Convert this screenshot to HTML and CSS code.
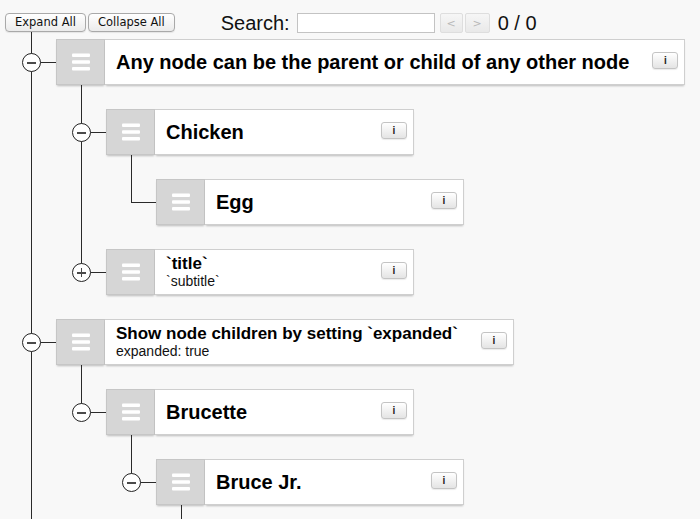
FILE: index.html
```html
<!DOCTYPE html>
<html lang="en">
<head>
<meta charset="utf-8">
<title>Sortable tree</title>
<link rel="stylesheet" href="styles.css">
</head>
<body>
<header class="toolbar">
  <button class="btn">Expand All</button>
  <button class="btn">Collapse All</button>
  <form class="search">
    <label class="search-label" for="q">Search:</label>
    <input id="q" class="search-input" type="text">
    <button type="button" class="nav-btn nav-prev" disabled>&lt;</button>
    <button type="button" class="nav-btn" disabled>&gt;</button>
    <span class="search-count">0 / 0</span>
  </form>
</header>

<div class="tree">
  <div class="row">
    <div class="scaf full hz"></div>
    <div class="node has-children">
      <button class="toggle minus" aria-label="Collapse"></button>
      <div class="handle"><svg viewBox="0 0 18 18" width="18" height="18"><rect y="0.5" width="18" height="3.5" rx="1"/><rect y="7.25" width="18" height="3.5" rx="1"/><rect y="14" width="18" height="3.5" rx="1"/></svg></div>
      <div class="content">
        <div class="label"><span class="title">Any node can be the parent or child of any other node</span></div>
        <button class="info">i</button>
      </div>
    </div>
  </div>

  <div class="row">
    <div class="scaf full"></div>
    <div class="scaf full hz"></div>
    <div class="node has-children">
      <button class="toggle minus" aria-label="Collapse"></button>
      <div class="handle"><svg viewBox="0 0 18 18" width="18" height="18"><rect y="0.5" width="18" height="3.5" rx="1"/><rect y="7.25" width="18" height="3.5" rx="1"/><rect y="14" width="18" height="3.5" rx="1"/></svg></div>
      <div class="content">
        <div class="label"><span class="title">Chicken</span></div>
        <button class="info">i</button>
      </div>
    </div>
  </div>

  <div class="row">
    <div class="scaf full"></div>
    <div class="scaf full"></div>
    <div class="scaf half hz"></div>
    <div class="node">
      <div class="handle"><svg viewBox="0 0 18 18" width="18" height="18"><rect y="0.5" width="18" height="3.5" rx="1"/><rect y="7.25" width="18" height="3.5" rx="1"/><rect y="14" width="18" height="3.5" rx="1"/></svg></div>
      <div class="content">
        <div class="label"><span class="title">Egg</span></div>
        <button class="info">i</button>
      </div>
    </div>
  </div>

  <div class="row">
    <div class="scaf full"></div>
    <div class="scaf half hz"></div>
    <div class="node">
      <button class="toggle plus" aria-label="Expand"></button>
      <div class="handle"><svg viewBox="0 0 18 18" width="18" height="18"><rect y="0.5" width="18" height="3.5" rx="1"/><rect y="7.25" width="18" height="3.5" rx="1"/><rect y="14" width="18" height="3.5" rx="1"/></svg></div>
      <div class="content">
        <div class="label">
          <span class="title small">`title`</span>
          <span class="subtitle">`subtitle`</span>
        </div>
        <button class="info">i</button>
      </div>
    </div>
  </div>

  <div class="row">
    <div class="scaf full hz"></div>
    <div class="node has-children">
      <button class="toggle minus" aria-label="Collapse"></button>
      <div class="handle"><svg viewBox="0 0 18 18" width="18" height="18"><rect y="0.5" width="18" height="3.5" rx="1"/><rect y="7.25" width="18" height="3.5" rx="1"/><rect y="14" width="18" height="3.5" rx="1"/></svg></div>
      <div class="content">
        <div class="label">
          <span class="title small">Show node children by setting `expanded`</span>
          <span class="subtitle">expanded: true</span>
        </div>
        <button class="info">i</button>
      </div>
    </div>
  </div>

  <div class="row">
    <div class="scaf full"></div>
    <div class="scaf half hz"></div>
    <div class="node has-children">
      <button class="toggle minus" aria-label="Collapse"></button>
      <div class="handle"><svg viewBox="0 0 18 18" width="18" height="18"><rect y="0.5" width="18" height="3.5" rx="1"/><rect y="7.25" width="18" height="3.5" rx="1"/><rect y="14" width="18" height="3.5" rx="1"/></svg></div>
      <div class="content">
        <div class="label"><span class="title">Brucette</span></div>
        <button class="info">i</button>
      </div>
    </div>
  </div>

  <div class="row">
    <div class="scaf full"></div>
    <div class="scaf"></div>
    <div class="scaf half hz"></div>
    <div class="node has-children">
      <button class="toggle minus" aria-label="Collapse"></button>
      <div class="handle"><svg viewBox="0 0 18 18" width="18" height="18"><rect y="0.5" width="18" height="3.5" rx="1"/><rect y="7.25" width="18" height="3.5" rx="1"/><rect y="14" width="18" height="3.5" rx="1"/></svg></div>
      <div class="content">
        <div class="label"><span class="title">Bruce Jr.</span></div>
        <button class="info">i</button>
      </div>
    </div>
  </div>

  <div class="row" aria-hidden="true">
    <div class="scaf full"></div>
    <div class="scaf"></div>
    <div class="scaf"></div>
    <div class="scaf half hz"></div>
  </div>
</div>
</body>
</html>
```

FILE: styles.css
```css
* { box-sizing: border-box; }

html, body {
  margin: 0;
  padding: 0;
  height: 100%;
  overflow: hidden;
  background: #f8f8f8;
  font-family: "Liberation Sans", Arial, Helvetica, sans-serif;
  color: #000;
}

/* ---------- toolbar ---------- */
.toolbar {
  position: relative;
  z-index: 2;
  height: 27px;
  padding: 13px 0 0 5px;
  display: flex;
  align-items: flex-start;
  gap: 2px;
}

.btn {
  height: 19px;
  padding: 0 9px;
  border: 1px solid #a9a9a9;
  border-radius: 4px;
  background: linear-gradient(#ffffff, #ebebeb);
  font-family: "DejaVu Sans", Verdana, sans-serif;
  font-size: 11.5px;
  color: #111;
  line-height: 17px;
  box-shadow: 0 1px 1px rgba(0,0,0,0.08);
}

.search {
  margin: 0 0 0 44px;
  height: 20px;
  display: flex;
  align-items: center;
}

.search-label {
  font-size: 20px;
  margin-right: 7px;
  color: #111;
}

.search-input {
  width: 138px;
  height: 20px;
  border: 1px solid #c3c3c3;
  background: #fff;
  margin: 0 5px 0 0;
  padding: 0;
}

.nav-btn {
  width: 23px;
  height: 20px;
  margin-right: 2px;
  border: 1px solid #dedede;
  border-radius: 2px;
  background: linear-gradient(#f6f6f6, #e9e9e9);
  color: #b8b8b8;
  font-family: "DejaVu Sans", sans-serif;
  font-size: 11px;
  padding: 0;
}
.nav-btn + .nav-btn { width: 25px; }

.search-count {
  margin-left: 6px;
  font-size: 20px;
  color: #111;
}

/* ---------- tree ---------- */
.tree {
  height: calc(100% - 27px);
  overflow: hidden;
  padding-left: 6px;
}

.row {
  display: flex;
  height: 70px;
}

.scaf {
  position: relative;
  flex: 0 0 50px;
  height: 70px;
}

.scaf.full::before,
.scaf.half::before {
  content: "";
  position: absolute;
  left: 25px;
  top: 0;
  width: 1px;
  background: #2a2a2a;
}
.scaf.full::before { bottom: 0; }
.scaf.half::before { height: 36px; }

.scaf.hz::after {
  content: "";
  position: absolute;
  left: 25px;
  top: 35px;
  width: 25px;
  height: 1px;
  background: #2a2a2a;
}

.node {
  position: relative;
  display: flex;
  height: 46px;
  margin-top: 12px;
}

.node.has-children::after {
  content: "";
  position: absolute;
  left: 25px;
  top: 46px;
  width: 1px;
  height: 12px;
  background: #2a2a2a;
}

.toggle {
  position: absolute;
  left: -34px;
  top: 14px;
  width: 19px;
  height: 19px;
  padding: 0;
  border: 1px solid #222;
  border-radius: 50%;
  background: #fff;
  z-index: 1;
}
.toggle::before {
  content: "";
  position: absolute;
  left: 4px;
  top: 7.75px;
  width: 9px;
  height: 1.75px;
  background: #4a4a4a;
}
.toggle.plus::after {
  content: "";
  position: absolute;
  left: 7.6px;
  top: 4.1px;
  width: 1.75px;
  height: 9px;
  background: #4a4a4a;
}

.handle {
  flex: 0 0 49px;
  height: 46px;
  background: #d6d6d6;
  border: 1px solid #c6c6c6;
  box-shadow: 0 2px 2px -1px rgba(0,0,0,0.25);
  display: flex;
  align-items: center;
  justify-content: center;
}
.handle svg { fill: #fff; display: block; }

.content {
  display: flex;
  align-items: center;
  min-width: 259px;
  height: 46px;
  padding: 0 6px 0 11px;
  background: #fff;
  border: 1px solid #cfcfcf;
  border-left: none;
  box-shadow: 0 2px 2px -1px rgba(0,0,0,0.25);
}

.label {
  flex: 1 1 auto;
  padding-right: 23px;
  display: flex;
  flex-direction: column;
  white-space: nowrap;
}

.title {
  font-size: 20px;
  font-weight: bold;
}
.title.small {
  font-size: 17px;
  line-height: 17px;
}
.subtitle {
  font-size: 14px;
  line-height: 18px;
  color: #111;
}

.info {
  flex: 0 0 26px;
  width: 26px;
  height: 17px;
  margin-bottom: 4px;
  padding: 0;
  border: 1px solid #c4c4c4;
  border-radius: 3px;
  background: linear-gradient(#ffffff, #e4e4e4);
  font-family: "Liberation Sans", Arial, sans-serif;
  font-weight: bold;
  font-size: 10px;
  line-height: 15px;
  color: #222;
  box-shadow: 0 1px 1px rgba(0,0,0,0.08);
}
```
